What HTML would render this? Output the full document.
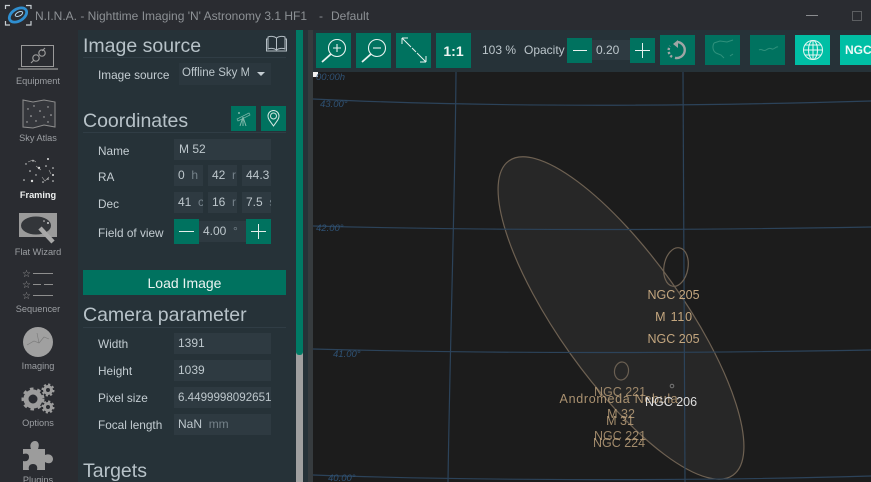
<!DOCTYPE html>
<html><head><meta charset="utf-8">
<style>
html,body{margin:0;padding:0;background:#2a2c31;overflow:hidden;}
#r{position:relative;width:871px;height:482px;overflow:hidden;background:#2a2c31;font-family:"Liberation Sans",sans-serif;color:#c4cdd2;}
.a{position:absolute;}
.t{position:absolute;white-space:nowrap;line-height:16px;}
.h{position:absolute;left:83px;font-size:19.5px;line-height:24px;color:#b7c2c8;white-space:nowrap;}
.hl{position:absolute;left:83px;width:203px;height:1px;background:#303d45;}
.lb{position:absolute;left:98px;font-size:11.8px;line-height:16px;color:#c4cdd2;white-space:nowrap;}
.f{position:absolute;background:#2e3a41;height:21px;font-size:12px;line-height:21px;color:#bdc7cc;overflow:hidden;white-space:nowrap;box-sizing:border-box;padding-left:4px;}
.f i{font-style:normal;color:#75828a;}
.b{position:absolute;background:#00725f;}
.n{position:absolute;left:0;width:76px;text-align:center;font-size:9.2px;line-height:12px;color:#9c9fa3;}
.g{position:absolute;color:#c3a67f;font-size:12.5px;line-height:16px;white-space:nowrap;transform:translateX(-50%);}
</style></head><body><div id="r">
<!-- title -->
<svg class="a" style="left:4px;top:4px" width="28" height="22" viewBox="0 0 28 22">
<path d="M1.500 5V1.500H6M22 1.500H27V5M1.500 17V21H6M22 21H27V17" fill="none" stroke="#c8ced2" stroke-width="1.200"/>
<ellipse cx="14" cy="11" rx="9.500" ry="6" transform="rotate(-32 14 11)" fill="none" stroke="#2f8fd0" stroke-width="2.800"/>
<ellipse cx="15" cy="10" rx="4" ry="2" transform="rotate(-25 15 10)" fill="none" stroke="#b8d8ec" stroke-width="1"/>
</svg>
<div class="t" style="left:35px;top:8px;font-size:12px;color:#8d9195;">N.I.N.A. - Nighttime Imaging 'N' Astronomy 3.1 HF1</div>
<div class="t" style="left:319px;top:8px;font-size:12px;color:#8d9195;">-</div>
<div class="t" style="left:331px;top:8px;font-size:12px;color:#8d9195;">Default</div>
<div class="a" style="left:806px;top:15px;width:12px;height:1px;background:#8b8d90"></div>
<div class="a" style="left:852px;top:11px;width:8px;height:8px;border:1px solid #5c5e61;"></div>

<!-- nav -->
<svg class="a" style="left:15px;top:43px" width="46" height="28" viewBox="0 0 46 28" fill="none" stroke="#9a9a9a">
<rect x="6.500" y="2.500" width="32" height="21" stroke-width="1"/><path d="M3 26H43" stroke-width="1.300"/>
<path d="M16 20l3-3M27 8l3-3" stroke-width="1.200"/><circle cx="21" cy="15" r="3.200" stroke-width="1.200"/><circle cx="27" cy="10" r="3.200" stroke-width="1.200"/>
</svg>
<div class="n" style="top:75px">Equipment</div>
<svg class="a" style="left:22px;top:99px" width="34" height="30" viewBox="0 0 34 30" fill="#bbb">
<path d="M1 1L11 3L22 1L33 3V28L22 26L11 29L1 28Z" fill="#34363b" stroke="#8e8e8e"/>
<circle cx="6" cy="10" r=".7"/><circle cx="12" cy="7" r=".7"/><circle cx="18" cy="12" r=".8"/><circle cx="26" cy="8" r=".7"/><circle cx="9" cy="17" r=".8"/><circle cx="22" cy="18" r=".7"/><circle cx="29" cy="16" r=".8"/><circle cx="14" cy="22" r=".7"/><circle cx="26" cy="23" r=".7"/><circle cx="5" cy="23" r=".7"/>
</svg>
<div class="n" style="top:132px">Sky Atlas</div>
<svg class="a" style="left:22px;top:156px" width="34" height="30" viewBox="0 0 34 30" fill="#ddd" stroke="none">
<circle cx="26" cy="3" r="1"/><circle cx="4" cy="8" r=".7"/><circle cx="11" cy="5" r=".7"/><circle cx="17" cy="12" r="1.200"/><circle cx="24" cy="10" r=".8"/><circle cx="31" cy="12" r=".8"/><circle cx="8" cy="15" r=".8"/><circle cx="31" cy="19" r="1"/><circle cx="2" cy="24" r=".8"/><circle cx="10" cy="25" r="1.200"/><circle cx="21" cy="26" r=".8"/><circle cx="26" cy="23" r=".8"/><circle cx="31" cy="25" r=".8"/><circle cx="14" cy="19" r=".7"/>
<path d="M20 21l3 4 4-4M6 6l5-2 3 2M27 14l2 4M14 10l5 4" fill="none" stroke="#aaa" stroke-width=".6"/>
</svg>
<div class="n" style="top:189px;color:#eef0f0;font-weight:bold;">Framing</div>
<svg class="a" style="left:19px;top:213px" width="38" height="36" viewBox="0 0 38 36">
<rect width="38" height="24" fill="#9a9a9a"/><ellipse cx="17" cy="12.500" rx="15" ry="9" fill="#33363a"/>
<path d="M21 15L34 29" stroke="#a8a8a8" stroke-width="4.500"/><circle cx="29" cy="10" r="1" fill="#ccc"/><circle cx="25" cy="8" r=".8" fill="#ccc"/>
</svg>
<div class="n" style="top:246px">Flat Wizard</div>
<div class="t" style="left:22px;top:269px;font-size:10px;line-height:11px;color:#9a9a9a;letter-spacing:0;">☆<br>☆<br>☆</div>
<svg class="a" style="left:33px;top:270px" width="21" height="32" stroke="#8e8e8e" stroke-width="1">
<path d="M0 3.500H20M0 14.500H8M11 14.500H20M0 25.500H20"/>
</svg>
<div class="n" style="top:303px">Sequencer</div>
<svg class="a" style="left:23px;top:327px" width="30" height="30" viewBox="0 0 30 30">
<circle cx="15" cy="15" r="15" fill="#a0a0a0"/><path d="M4 18l7-4 5 2 5-6 5 2M14 6l2 10" fill="none" stroke="#777" stroke-width=".6"/>
</svg>
<div class="n" style="top:360px">Imaging</div>
<svg class="a" style="left:21px;top:383px" width="35" height="32" viewBox="0 0 35 32">
<g fill="none" stroke="#9c9c9c"><circle cx="12" cy="16" r="7" stroke-width="5"/><circle cx="12" cy="16" r="10" stroke-width="3" stroke-dasharray="3.500 3.800"/>
<circle cx="27" cy="7" r="3.500" stroke-width="3"/><circle cx="27" cy="7" r="5.500" stroke-width="2" stroke-dasharray="2.200 2.100"/>
<circle cx="27" cy="24" r="3.500" stroke-width="3"/><circle cx="27" cy="24" r="5.500" stroke-width="2" stroke-dasharray="2.200 2.100"/></g>
</svg>
<div class="n" style="top:417px">Options</div>
<svg class="a" style="left:22px;top:441px" width="32" height="30" viewBox="0 0 32 30">
<path d="M1 8H9C7 3 10 0 13 0S18 3 16 8H23V14C28 12 31 15 31 18S28 24 23 21V29H15C16 25 14 23 11 23S6 25 7 29H1V20C5 21 7 19 7 16S5 12 1 13Z" fill="#9c9c9c"/>
</svg>
<div class="n" style="top:474px;height:8px;overflow:hidden">Plugins</div>

<!-- panel -->
<div class="a" style="left:78px;top:30px;width:218px;height:452px;background:#263238"></div>
<div class="a" style="left:296px;top:30px;width:7px;height:452px;background:#a0a0a0"></div>
<div class="a" style="left:296px;top:30px;width:7px;height:325px;background:#007a65;border-radius:0 0 3px 3px"></div>
<div class="a" style="left:303px;top:30px;width:5px;height:452px;background:#263238"></div>
<div class="a" style="left:308px;top:30px;width:5px;height:452px;background:#363b3e"></div>

<div class="h" style="top:34px">Image source</div>
<svg class="a" style="left:266px;top:35px" width="21" height="17" viewBox="0 0 21 17" fill="none" stroke="#b4bec4">
<path d="M10.500 3C8 1 4 1 2 2V14C4 13 8 13 10.500 15C13 13 17 13 19 14V2C17 1 13 1 10.500 3V15M2 4H.5V16H20.500V4H19"/>
</svg>
<div class="hl" style="top:57px"></div>
<div class="lb" style="top:67px">Image source</div>
<div class="f" style="left:179px;top:63px;width:92px;height:22px;background:#2b373e;padding-left:3px;font-size:11.5px;"><span style="display:inline-block;width:67px;overflow:hidden">Offline Sky M</span></div>
<div class="a" style="left:257px;top:72px;border-left:4px solid transparent;border-right:4px solid transparent;border-top:4px solid #c4cdd2"></div>

<div class="h" style="top:109px">Coordinates</div>
<div class="hl" style="top:132px"></div>
<div class="b" style="left:231px;top:106px;width:25px;height:25px"></div>
<svg class="a" style="left:231px;top:106px" width="25" height="25" fill="none" stroke="#7fb8aa" stroke-width="1"><path d="M12 11L9 20M12 11L15 20M12 11V20" /><path d="M6 13l1 2 12-6-1-2z" stroke-width=".7"/><circle cx="8" cy="7" r=".5"/></svg>
<div class="b" style="left:261px;top:106px;width:25px;height:25px"></div>
<svg class="a" style="left:261px;top:106px" width="25" height="25" fill="none" stroke="#d4e8e3" stroke-width="1"><path d="M12.500 20C9 15 7 13 7 10A5.500 5.500 0 0 1 18 10C18 13 16 15 12.500 20Z"/><circle cx="12.500" cy="10" r="3"/></svg>

<div class="lb" style="top:143px">Name</div>
<div class="f" style="left:174px;top:139px;width:97px;padding-left:5px">M 52</div>
<div class="lb" style="top:169px">RA</div>
<div class="f" style="left:174px;top:165px;width:29px;">0 &nbsp;<i>h</i></div>
<div class="f" style="left:208px;top:165px;width:29px;">42 &nbsp;<i>r</i></div>
<div class="f" style="left:242px;top:165px;width:29px;padding-left:4px">44.3</div>
<div class="lb" style="top:196px">Dec</div>
<div class="f" style="left:174px;top:192px;width:29px;">41 &nbsp;<i>c</i></div>
<div class="f" style="left:208px;top:192px;width:29px;">16 &nbsp;<i>r</i></div>
<div class="f" style="left:242px;top:192px;width:29px;">7.5 &nbsp;<i>s</i></div>
<div class="lb" style="top:225px">Field of view</div>
<div class="f" style="left:199px;top:221px;width:47px;height:21px;padding-left:4px">4.00 &nbsp;<i>°</i></div>
<div class="b" style="left:174px;top:219px;width:25px;height:25px"></div>
<div class="a" style="left:179px;top:231px;width:15px;height:1px;background:#e4eeeb"></div>
<div class="b" style="left:246px;top:219px;width:25px;height:25px"></div>
<div class="a" style="left:251px;top:231px;width:15px;height:1px;background:#e4eeeb"></div>
<div class="a" style="left:258px;top:224px;width:1px;height:15px;background:#e4eeeb"></div>

<div class="b" style="left:83px;top:270px;width:203px;height:25px;color:#eaf3f1;font-size:14px;line-height:27px;text-align:center;">Load Image</div>

<div class="h" style="top:303px">Camera parameter</div>
<div class="hl" style="top:327px"></div>
<div class="lb" style="top:336px">Width</div>
<div class="f" style="left:174px;top:333px;width:97px;padding-left:4px">1391</div>
<div class="lb" style="top:363px">Height</div>
<div class="f" style="left:174px;top:360px;width:97px;padding-left:4px">1039</div>
<div class="lb" style="top:390px">Pixel size</div>
<div class="f" style="left:174px;top:387px;width:97px;padding-left:4px;font-size:11.6px">6.4499998092651</div>
<div class="lb" style="top:417px">Focal length</div>
<div class="f" style="left:174px;top:414px;width:97px;padding-left:4px">NaN &nbsp;<i>mm</i></div>
<div class="h" style="top:459px;height:23px;overflow:hidden">Targets</div>

<!-- toolbar -->
<div class="a" style="left:313px;top:30px;width:558px;height:42px;background:#263238"></div>
<div class="b" style="left:316px;top:33px;width:35px;height:35px"></div>
<div class="b" style="left:356px;top:33px;width:35px;height:35px"></div>
<div class="b" style="left:396px;top:33px;width:35px;height:35px"></div>
<div class="b" style="left:436px;top:33px;width:35px;height:35px;color:#eef5f3;font-size:14px;font-weight:bold;line-height:37px;text-align:center">1:1</div>
<svg class="a" style="left:316px;top:33px" width="115" height="35" fill="none" stroke="#e8f2ef" stroke-width="1.100">
<circle cx="21" cy="15" r="8.500"/><path d="M15 21L6 29" stroke-width="1.800"/><path d="M17 15H25M21 11V19"/>
<circle cx="61" cy="15" r="8.500"/><path d="M55 21L46 29" stroke-width="1.800"/><path d="M57 15H65"/>
<path d="M86 5L95 14M101 20L110 29M86 5H92M86 5V11M110 29H104M110 29V23" stroke-width="1"/><path d="M96 15L100 19" stroke-width="1"/>
</svg>
<div class="t" style="left:482px;top:42px;font-size:12px;color:#bcc6cb;">103 %</div>
<div class="t" style="left:524px;top:42px;font-size:12px;color:#bcc6cb;">Opacity</div>
<div class="b" style="left:567px;top:38px;width:25px;height:25px"></div>
<div class="a" style="left:573px;top:50px;width:14px;height:1px;background:#e8f2ef"></div>
<div class="f" style="left:592px;top:40px;width:38px;height:20px;line-height:20px;padding-left:4px">0.20</div>
<div class="b" style="left:630px;top:38px;width:25px;height:25px"></div>
<div class="a" style="left:635px;top:50px;width:15px;height:1px;background:#e8f2ef"></div>
<div class="a" style="left:642px;top:43px;width:1px;height:15px;background:#e8f2ef"></div>
<div class="b" style="left:660px;top:35px;width:35px;height:30px"></div>
<svg class="a" style="left:660px;top:35px" width="35" height="30" fill="none" stroke="#9fa5a5" stroke-width="2.400">
<path d="M17 7A8 8 0 1 1 15 22.800"/><path d="M12 22A8 8 0 0 1 10 11" stroke-dasharray="2.200 1.800"/><path d="M18 5V13L13 9Z" fill="#9fa5a5" stroke="none"/>
</svg>
<div class="b" style="left:705px;top:35px;width:35px;height:30px"></div>
<svg class="a" style="left:705px;top:35px" width="35" height="30" fill="none" stroke="#2f917c" stroke-width="1">
<path d="M9 8L15 6 22 7 28 5M9 8C7 12 8 16 11 18L16 20 19 23M25 21L28 19"/>
</svg>
<div class="b" style="left:750px;top:35px;width:35px;height:30px"></div>
<svg class="a" style="left:750px;top:35px" width="35" height="30" fill="none" stroke="#2f917c" stroke-width="1">
<path d="M9 15C12 13 13 17 16 15S20 13 22 14 26 11 28 12"/>
</svg>
<div class="a" style="left:795px;top:35px;width:35px;height:30px;background:#00bfa5"></div>
<svg class="a" style="left:795px;top:35px" width="35" height="30" fill="none" stroke="#e4f7f3" stroke-width="1">
<circle cx="18" cy="15" r="9.500"/><ellipse cx="18" cy="15" rx="4.500" ry="9.500"/><path d="M18 5.500V24.500M8.500 15H27.500M10 10H26M10 20H26"/>
</svg>
<div class="a" style="left:840px;top:35px;width:31px;height:30px;background:#00bfa5;color:#eefaf8;font-size:12px;font-weight:bold;line-height:30px;padding-left:5px;box-sizing:border-box;overflow:hidden;">NGC</div>

<!-- map -->
<div class="a" style="left:313px;top:72px;width:558px;height:410px;background:#1c1c1c"></div>
<svg class="a" style="left:313px;top:72px" width="558" height="410" viewBox="313 72 558 410" fill="none">
<g transform="rotate(54.5 621 318)"><ellipse cx="621" cy="318" rx="193" ry="62" fill="#272727" stroke="#6e6152" stroke-width="1.200"/></g>
<g stroke="#2c435a" stroke-width="1.200">
<path d="M456 72C455 200 450 340 448 482"/>
<path d="M683 72C684 200 685 340 685 482"/>
<path d="M313 99C500 108 700 106 871 101"/>
<path d="M313 226C500 231 700 230 871 227"/>
<path d="M313 349C500 354 700 353 871 350"/>
<path d="M313 475C480 481 700 481 871 476"/>
</g>
<ellipse cx="676" cy="267" rx="12" ry="19.500" transform="rotate(10 676 267)" stroke="#6e6152" stroke-width="1.200"/>
<ellipse cx="621.500" cy="371" rx="7" ry="9" transform="rotate(8 621.500 371)" stroke="#6a5f52" stroke-width="1.200"/>
<circle cx="672" cy="386" r="1.800" stroke="#777" stroke-width="1"/>
</svg>
<div class="a" style="left:313px;top:72px;width:5px;height:5px;background:#f2f2f2"></div>
<div class="t" style="left:316px;top:70px;font-size:9.500px;font-style:italic;color:#2f5274;">00:00h</div>
<div class="t" style="left:320px;top:97px;font-size:9.500px;font-style:italic;color:#2f5274;">43.00°</div>
<div class="t" style="left:316px;top:221px;font-size:9.500px;font-style:italic;color:#2f5274;">42.00°</div>
<div class="t" style="left:333px;top:347px;font-size:9.500px;font-style:italic;color:#2f5274;">41.00°</div>
<div class="t" style="left:328px;top:466px;height:16px;line-height:26px;overflow:hidden;font-size:9.500px;font-style:italic;color:#2f5274;">40.00°</div>

<div class="g" style="left:673.500px;top:287px">NGC 205</div>
<div class="g" style="left:674px;top:309px;letter-spacing:.8px">M 110</div>
<div class="g" style="left:673.500px;top:331px">NGC 205</div>
<div class="g" style="left:620px;top:384px;opacity:.75">NGC 221</div>
<div class="g" style="left:619px;top:391px;opacity:.85;letter-spacing:.7px">Andromeda Nebula</div>
<div class="g" style="left:621px;top:406px;opacity:.8">M 32</div>
<div class="g" style="left:620px;top:413px;opacity:.8">M 31</div>
<div class="g" style="left:620px;top:428px;opacity:.75">NGC 221</div>
<div class="g" style="left:619px;top:435px;opacity:.8">NGC 224</div>
<div class="g" style="left:671px;top:394px;color:#dedede">NGC 206</div>
</div></body></html>
